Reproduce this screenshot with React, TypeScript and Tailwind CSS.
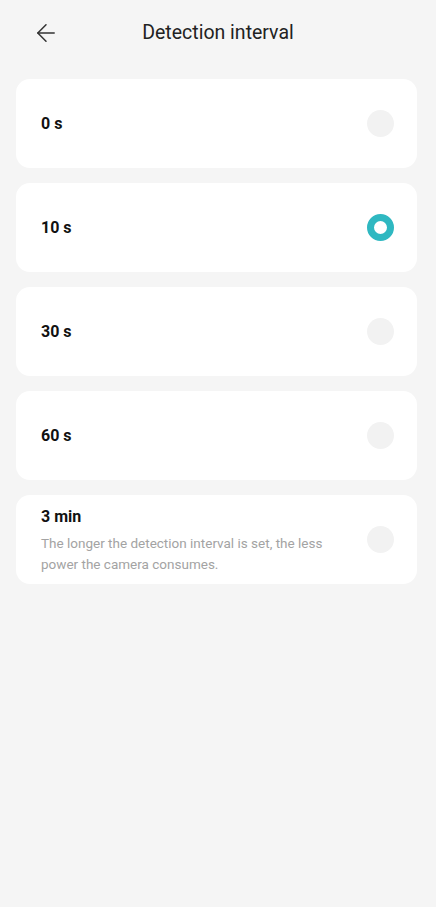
import { ArrowLeft } from "lucide-react"

const options = [
  { label: "0 s" },
  { label: "10 s", selected: true },
  { label: "30 s" },
  { label: "60 s" },
  {
    label: "3 min",
    note: "The longer the detection interval is set, the less power the camera consumes.",
  },
]

export default function App() {
  return (
    <div
      className="min-h-[907px] w-full bg-[#f5f5f5]"
      style={{ fontFamily: "Roboto, 'Noto Sans', sans-serif" }}
    >
      <header className="relative flex h-[66px] items-center justify-center">
        <button className="absolute left-[32px] top-[19px] text-[#333]">
          <ArrowLeft className="h-[28px] w-[28px]" strokeWidth={1.3} />
        </button>
        <h1 className="text-[19.5px] text-[#222]">Detection interval</h1>
      </header>

      <div className="flex flex-col gap-[15px] pl-4 pr-[19px] pt-[13px]">
        {options.map((opt, i) => (
          <OptionRow key={i} opt={opt} />
        ))}
      </div>
    </div>
  )
}

function OptionRow({ opt }: { opt: { label: string; selected?: boolean; note?: string } }) {
  return (
    <div className="flex h-[89px] items-center rounded-[14px] bg-white pl-[25px] pr-[23px]">
      <div className="flex-1">
        <div className="text-[16px] font-bold text-[#111]">{opt.label}</div>
        {opt.note && (
          <p className="mt-[4px] w-[295px] text-[13.5px] leading-[21px] text-[#a3a3a3]">{opt.note}</p>
        )}
      </div>
      {opt.selected ? (
        <div className="h-[27px] w-[27px] rounded-full border-[7px] border-[#2fb8c1]" />
      ) : (
        <div className="h-[27px] w-[27px] rounded-full bg-[#f2f2f2]" />
      )}
    </div>
  )
}
